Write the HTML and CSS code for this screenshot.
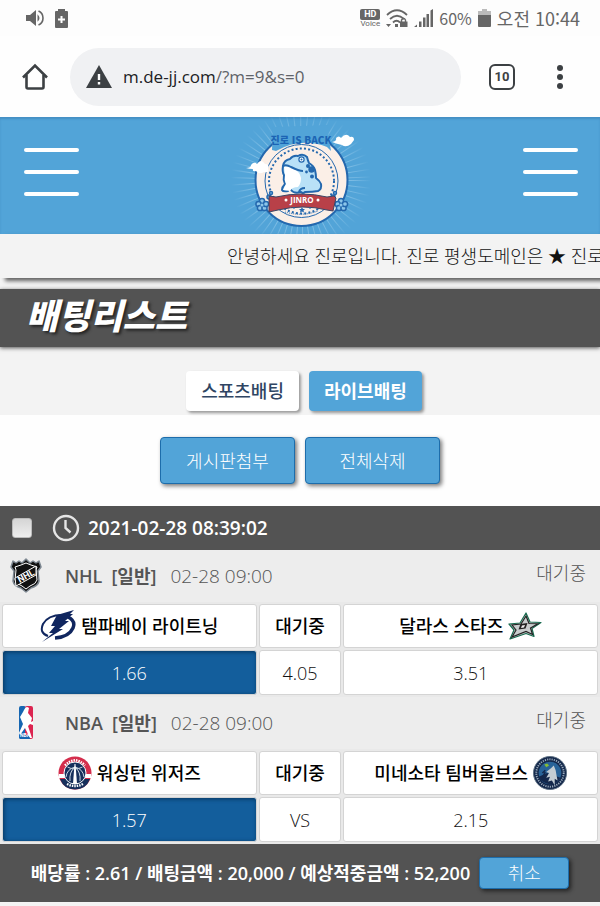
FILE: index.html
```html
<!DOCTYPE html>
<html lang="ko">
<head>
    <meta charset="UTF-8">
    <meta name="viewport" content="width=device-width, initial-scale=1.0">
    <title>배팅리스트</title>
    <link rel="stylesheet" href="styles.css">
</head>
<body>

    <!-- 상태 표시줄 -->
    <div class="status-bar">
        <div class="status-left">
            <svg width="18" height="18" viewBox="0 0 18 18" fill="#666">
                <path d="M0 6h4l6-5v16l-6-5H0z"/>
                <path d="M11.500 5.200q4 3.800 0 7.600z"/>
                <path d="M12.500 2q4.500 2 4.500 7t-4.500 7" fill="none" stroke="#666" stroke-width="1.600"/>
            </svg>
            <svg width="13" height="19" viewBox="0 0 13 19">
                <path fill="#666" d="M3 2V0h7v2h2q1 0 1 1v15q0 1-1 1H1q-1 0-1-1V3q0-1 1-1z"/>
                <path stroke="#fff" stroke-width="2" d="M3 10.500h7M6.500 7v7"/>
            </svg>
        </div>
        <div class="status-right">
            <div class="hd"><b>HD</b><span>Voice</span></div>
            <svg width="22" height="19" viewBox="0 0 22 19">
                <g fill="none" stroke="#666" stroke-width="1.800">
                    <path d="M1 6q10-9.500 20 0"/>
                    <path d="M4 10q7-6.500 14 0"/>
                    <path d="M7 13.500q3.500-3.500 7 0"/>
                    <path d="M15.500 13v-2q2.500-3 4 0v2" stroke-width="1.400"/>
                </g>
                <path fill="#666" d="M0 15h5l-2.500 3zM9 15h3v3H9zM14 12.500h7.500V18H14z"/>
            </svg>
            <svg width="19" height="18" viewBox="0 0 19 18" fill="#666">
                <path d="M0 18l3-2.500V18zM5 12.500h2.500V18H5zM9 8.500h2.500V18H9zM12.500 5H15v13h-2.500zM16.500 1.500L19 0v18h-2.500z"/>
            </svg>
            <span class="percent">60%</span>
            <svg width="13" height="18" viewBox="0 0 13 18">
                <path fill="#bbb" d="M4 0h5v2h4v5H0V2h4z"/>
                <path fill="#666" d="M0 6h13v11q0 1-1 1H1q-1 0-1-1z"/>
            </svg>
            <span class="clock">오전 10:44</span>
        </div>
    </div>

    <!-- 브라우저 주소창 -->
    <div class="browser-bar">
        <button class="icon-btn" type="button" aria-label="홈">
            <svg width="28" height="28" viewBox="0 0 28 28" fill="none" stroke="#3c4043" stroke-width="2.600" stroke-linejoin="round">
                <path d="M2 14.500L14 2.500l12 12" stroke-linejoin="miter"/>
                <path d="M5.500 12v12q0 1.500 1.500 1.500h14q1.500 0 1.500-1.500V12"/>
            </svg>
        </button>
        <div class="address">
            <svg width="26" height="23" viewBox="0 0 26 23">
                <path fill="#3c4043" d="M13 0l13 23H0z"/>
                <path stroke="#fff" stroke-width="2.400" d="M13 9v6M13 17v2.500"/>
            </svg>
            <span class="url">m.de-jj.com<i>/?m=9&amp;s=0</i></span>
        </div>
        <button class="tab-count" type="button">10</button>
        <button class="icon-btn" type="button" aria-label="더보기">
            <svg width="8" height="26" viewBox="0 0 8 26" fill="#3c4043">
                <circle cx="4" cy="4" r="3"/><circle cx="4" cy="13" r="3"/><circle cx="4" cy="22" r="3"/>
            </svg>
        </button>
    </div>

    <!-- 사이트 헤더 -->
    <header>
        <button class="menu" type="button" aria-label="왼쪽 메뉴"><span></span><span></span><span></span></button>
        <a class="logo" href="#" aria-label="진로">
            <svg width="160" height="117" viewBox="0 2 160 117">
                <defs>
                    <radialGradient id="ray" gradientUnits="userSpaceOnUse" cx="80" cy="65" r="70">
                        <stop offset=".6" stop-color="#b9def4" stop-opacity=".6"/>
                        <stop offset="1" stop-color="#b9def4" stop-opacity="0"/>
                    </radialGradient>
                </defs>
                <!-- 방사형 빛줄기 -->
                <circle cx="80" cy="65" r="55" fill="none" stroke="url(#ray)" stroke-width="32" stroke-dasharray="1 5"/>
                <circle cx="80.500" cy="65" r="46" fill="#fbefe7" stroke="#2468ae" stroke-width="2"/>
                <circle cx="80.500" cy="66" r="36.500" fill="none" stroke="#2468ae" stroke-width="1"/>
                <circle cx="80.500" cy="66" r="32.500" fill="none" stroke="#2468ae" stroke-width="2" stroke-dasharray="2 2.200"/>
                <path fill="#52a4d8" d="M52 12l54-2 4 26-4-4Q80 22 55 36l-4-1z"/>
                <!-- 두꺼비 -->
                <path fill="#b9e1f7" stroke="#2468ae" stroke-width="2" stroke-linejoin="round" d="M62 51q1-6 7-7 3-4 8-3 5-3 9 1 1 4 2 6 5 3 6 7 1 4 1 8 4 3 5 6 1 5-3 7-5 1-13 1-2 2-4 0-7 2-10-2-1-2 0-4-3 2-3 5-5 1-6-1 0-3 3-6-2-4-1-9-2-3-1-9z"/>
                <path fill="#fff" d="M63 52q4-2 9 1 7 4 8 10 0 6-3 9-6 0-8 4l-7-1 3-6q-2-4-1-9z"/>
                <path fill="none" stroke="#2468ae" stroke-width="2" d="M62 51q3-2 8 1 8 4 12 4M78 77q1-4 6-4"/>
                <circle cx="80.500" cy="44.500" r="2.600" fill="#fff" stroke="#2468ae" stroke-width="1.200"/>
                <g fill="#2468ae"><circle cx="80.500" cy="44.500" r="1"/><circle cx="87" cy="51" r="2"/><circle cx="90.500" cy="54.500" r="3.200"/><circle cx="85.500" cy="57" r="1.400"/><circle cx="91" cy="61.500" r="2"/></g>
                <!-- 구름 -->
                <g fill="#fff">
                    <path d="M25 53q5 0 5-3 3-4 6-1 4-6 8 0 5 0 3 5 2 4-4 3-5 3-8-1-4 1-3-2-4 0-7-1zM111 27q5-1 4-4 3-3 5 0 5-6 9-1 4-1 4 3l-3 4q-5 4-9 1-5-1-10-3z"/>
                </g>
                <!-- 꽃 -->
                <g fill="#8cc6ea" stroke="#2468ae" stroke-width="1.500">
                    <g id="flower">
                        <circle cx="41" cy="86" r="2.600"/><circle cx="37.500" cy="89" r="2.600"/><circle cx="39" cy="93" r="2.600"/>
                        <circle cx="43.500" cy="93" r="2.600"/><circle cx="45" cy="89" r="2.600"/><circle cx="41" cy="90" r="1.500" stroke="none"/>
                    </g>
                    <use href="#flower" x="79"/>
                    <circle cx="48" cy="82" r="2"/><circle cx="112" cy="82" r="2"/>
                    <circle cx="50" cy="78" r="1.500"/><circle cx="114" cy="78" r="1.500"/>
                </g>
                <path fill="#b84048" stroke="#3b4565" stroke-width="1" d="M48 81l7 1q26-6 51 0l7-1 2 2-3 13-6-1q-24-6-49 0l-9 2z"/>
                <g fill="#fff"><circle cx="65" cy="85" r="1.500"/><circle cx="97" cy="85" r="1.500"/></g>
                <text class="logo-name" x="81" y="88" text-anchor="middle">JINRO</text>
                <path fill="#2468ae" d="M81 92l1 2h2l-1.500 1.500.500 2-2-1-2 1 .500-2L78 94h2zM73 92l1 1-1 1-1-1zM89 92l1 1-1 1-1-1z"/>
                <path fill="none" stroke="#2468ae" stroke-dasharray="1 1" d="M64 97q17 5 33-1"/>
                <text class="logo-title" x="80" y="29" text-anchor="middle">진로 IS BACK</text>
            </svg>
        </a>
        <button class="menu" type="button" aria-label="오른쪽 메뉴"><span></span><span></span><span></span></button>
    </header>

    <div class="notice"><p>안녕하세요 진로입니다. 진로 평생도메인은 ★ 진로</p></div>

    <h1 class="page-title">배팅리스트</h1>

    <nav class="tabs">
        <a href="#">스포츠배팅</a>
        <a href="#" class="active">라이브배팅</a>
    </nav>

    <div class="actions">
        <button class="btn" type="button">게시판첨부</button>
        <button class="btn" type="button">전체삭제</button>
    </div>

    <!-- 배팅 내역 -->
    <main>
        <div class="bet-head">
            <input type="checkbox" id="bet1">
            <label for="bet1">
                <svg width="28" height="28" viewBox="0 0 28 28" fill="none" stroke="#e6e6e6" stroke-width="2.400">
                    <circle cx="14" cy="14" r="12"/>
                    <path d="M13.500 6v8l5 4.500"/>
                </svg>
                2021-02-28 08:39:02
            </label>
        </div>

        <div class="match">
            <svg class="league-logo" width="32" height="36" viewBox="0 0 32 36">
                <path fill="#111" stroke="#7d8791" stroke-width="1.500" stroke-linejoin="round" d="M3 3l3 2 3-2 3 2 4-4 4 4 3-2 3 2 3-2 2 6-3 4 1 10q-1 5-8 7l-5 4-5-4q-7-2-8-7l1-10-3-4z"/>
                <path fill="none" stroke="#fff" stroke-width="1" d="M5 9l6-2 5-2 5 2 6 2-1 3 1 10q-1 4-7 6l-4 3-4-3q-6-2-7-6l1-10z"/>
                <path fill="#111" stroke="#fff" stroke-width="1" d="M5 20L26 8v9L6 28z"/>
                <text class="nhl-text" x="16" y="21" text-anchor="middle" transform="rotate(-29 16 18)">NHL</text>
            </svg>
            <strong>NHL</strong><strong>[일반]</strong><time>02-28 09:00</time>
            <span class="state">대기중</span>
        </div>
        <table class="odds">
            <tr>
                <th><div class="team">
                    <svg width="36" height="32" viewBox="0 0 36 32">
                        <path fill="none" stroke="#10265f" stroke-width="2" d="M22 5Q8 5 3 14q-4 9 5 12"/>
                        <path fill="none" stroke="#10265f" stroke-width="3.400" d="M28 7q8 4 5 11-4 9-18 10"/>
                        <path fill="#10265f" d="M34 0L17 5l-6 11h4l-6 7h4L2 32l21-13h-4l10-8h-4l8-7h-3z"/>
                    </svg>
                    탬파베이 라이트닝
                </div></th>
                <th class="mid">대기중</th>
                <th><div class="team">
                    달라스 스타즈
                    <svg width="34" height="28" viewBox="0 0 34 28">
                        <path fill="#c9cdce" stroke="#176b4f" stroke-width="1.200" stroke-linejoin="round" d="M18 1l4 9 11 .500-9 6 2 8-8-3L2 27l4-9-5-6 11-1z"/>
                        <path fill="none" stroke="#222" stroke-width="1.200" d="M18 4l3 7.500 9 .200-7.500 4.300 2 6.500-6.500-3L4 25l4-7-4-5 9-1z"/>
                        <path fill="#222" d="M12.500 12l7-1-2 5.500-7 1z"/>
                        <path fill="#eee" d="M14 13.500l3-.500-1 2.500-3 .500z"/>
                    </svg>
                </div></th>
            </tr>
            <tr>
                <td class="pick">1.66</td>
                <td>4.05</td>
                <td>3.51</td>
            </tr>
        </table>

        <div class="match">
            <svg class="league-logo" width="32" height="36" viewBox="0 0 32 36">
                <rect x="9" y="1" width="7" height="33" rx="2" fill="#1666b2"/>
                <rect x="15" y="1" width="8" height="33" rx="2" fill="#dc2450"/>
                <path fill="#1666b2" d="M9 22h4l-1 8h8v4h-9q-2 0-2-2z"/>
                <path fill="#fff" d="M14 5q2-5 5-2l-1 5 4 5-1 4 2-1v4l-3-1-2 2 4 12h-2l-5-10-5 7-1-2 4-9-3-7 3-5z"/>
                <text class="nba-text" x="15" y="32" text-anchor="middle">NBA</text>
            </svg>
            <strong>NBA</strong><strong>[일반]</strong><time>02-28 09:00</time>
            <span class="state">대기중</span>
        </div>
        <table class="odds">
            <tr>
                <th><div class="team">
                    <svg width="34" height="34" viewBox="0 0 34 34">
                        <circle cx="17" cy="17" r="16.500" fill="#d42d4c"/>
                        <path fill="#fff" d="M1 18h32v4H1z"/>
                        <path fill="#17305c" d="M2 23h30q-4 10.500-15 10.500T2 23z"/>
                        <path fill="none" stroke="#fff" stroke-width="2.400" stroke-dasharray="1.500 1" d="M7 9.500Q17-1 27 9.500M9 28q8 4 16 0"/>
                        <circle cx="17" cy="17" r="11" fill="#17305c" stroke="#fff"/>
                        <path fill="none" stroke="#c9d4df" stroke-width="1" d="M9.500 11q7.500 4 15 0M8 21q1-8 9-10 8 2 9 10M12 25q-1-9 5-14 6 5 5 14"/>
                        <path fill="#fff" d="M16.500 8h1l1.500 20h-4z"/>
                    </svg>
                    워싱턴 위저즈
                </div></th>
                <th class="mid">대기중</th>
                <th><div class="team">
                    미네소타 팀버울브스
                    <svg width="34" height="34" viewBox="0 0 36 36">
                        <circle cx="18" cy="18" r="17.500" fill="#14284b" stroke="#5d7184"/>
                        <circle cx="18" cy="18" r="14.500" fill="none" stroke="#9fb0bf" stroke-width="2" stroke-dasharray="1.200 1.200"/>
                        <circle cx="18" cy="18" r="12" fill="#286398"/>
                        <path fill="#14284b" d="M6 22l9-4 14 5q-4 7-11 7-8-1-12-8z"/>
                        <path fill="#c3cdd3" d="M22 10l2 5 1 6 1 5-3-2v7l-3-5-4 1 2-5-4 1 3-5-3-1 5-4z"/>
                        <path fill="none" stroke="#14284b" stroke-width="1.500" d="M8 26l5-9M10 18l3-3"/>
                        <path fill="#87bd34" d="M12 9l3-1 2 2-3 2z"/>
                    </svg>
                </div></th>
            </tr>
            <tr>
                <td class="pick">1.57</td>
                <td>VS</td>
                <td>2.15</td>
            </tr>
        </table>

        <div class="summary">
            <span>배당률 : 2.61 / 배팅금액 : 20,000 / 예상적중금액 : 52,200</span>
            <button class="btn small" type="button">취소</button>
        </div>
    </main>

</body>
</html>
```
FILE: styles.css
```css
/* 공통 스타일 */
* {
    box-sizing: border-box;
}

body {
    margin: 0;
    font-family: "Open Sans", "Noto Sans CJK KR", sans-serif;
    font-size: 18px;
    line-height: 24px;
    color: #111;
    background-color: #f3f3f3;
    overflow-x: hidden;
}

svg {
    display: block;
    flex: none;
}

button {
    font: inherit;
    cursor: pointer;
}

a {
    text-decoration: none;
}

/* 상태 표시줄 */
.status-bar {
    display: flex;
    justify-content: space-between;
    align-items: center;
    height: 36px;
    padding: 0 20px 0 26px;
    background-color: #fdfdfd;
    color: #666;
}

.status-left {
    display: flex;
    align-items: center;
    gap: 11px;
}

.status-right {
    display: flex;
    align-items: center;
    gap: 6px;
    font-family: "Noto Sans CJK KR", sans-serif;
    font-weight: 400;
}

.hd {
    display: flex;
    flex-direction: column;
    align-items: center;
    font: 400 8px/8px Roboto, sans-serif;
}

.hd b {
    width: 20px;
    background-color: #666;
    border-radius: 2px;
    color: #fff;
    font-size: 9px;
    line-height: 11px;
    text-align: center;
}

.percent {
    font-size: 16px;
}

.clock {
    font-size: 18px;
}

/* 주소창 */
.browser-bar {
    display: flex;
    align-items: center;
    height: 81px;
    padding: 0 20px 0 15px;
    background-color: #fefefe;
}

.icon-btn {
    display: flex;
    justify-content: center;
    width: 40px;
    padding: 0;
    border: 0;
    background: none;
}

.address {
    flex: 1;
    display: flex;
    align-items: center;
    gap: 11px;
    height: 58px;
    margin: 0 28px 0 15px;
    padding: 0 16px;
    border-radius: 29px;
    background-color: #f0f1f3;
}

.url {
    font-size: 17px;
    color: #202124;
}

.url i {
    font-style: normal;
    color: #5f6368;
}

.tab-count {
    width: 26px;
    height: 26px;
    margin-right: 25px;
    padding: 0;
    border: 2px solid #3c4043;
    border-radius: 6px;
    background: none;
    color: #3c4043;
    font: 700 13px/20px Roboto, sans-serif;
}

/* 사이트 헤더 */
header {
    display: flex;
    justify-content: space-between;
    align-items: center;
    padding: 0 22px 0 24px;
    background-color: #52a4d8;
    box-shadow: inset 0 2px 2px #4590c4;
}

.menu {
    display: flex;
    flex-direction: column;
    gap: 18px;
    width: 55px;
    padding: 0 0 8px;
    border: 0;
    background: none;
}

.menu span {
    height: 4px;
    border-radius: 2px;
    background-color: #fff;
}

.logo-name {
    fill: #fff;
    font: 700 8px "Open Sans", sans-serif;
}

.logo-title {
    fill: #1c64b4;
    font: 900 10px "Noto Sans CJK KR", sans-serif;
}

/* 공지 */
.notice {
    height: 44px;
    padding-left: 227px;
    background-color: #f3f3f3;
    box-shadow: 5px 3px 4px rgba(0, 0, 0, 0.6);
}

.notice p {
    margin: 0;
    font-weight: 300;
    line-height: 44px;
    white-space: nowrap;
}

/* 페이지 제목 */
.page-title {
    margin: 11px 0 0;
    padding: 0 26px 4px;
    background-color: #535353;
    box-shadow: 0 1px 4px #555;
    color: #fff;
    font-size: 35px;
    font-style: italic;
    font-weight: 900;
    line-height: 54px;
    text-shadow: 2px 2px 3px #222;
}

/* 탭 */
.tabs {
    display: flex;
    justify-content: center;
    gap: 10px;
    padding: 24px 0 4px 8px;
}

.tabs a {
    padding: 0 15px;
    border-radius: 4px;
    background-color: #fff;
    box-shadow: 2px 2px 3px #999;
    color: #2f4563;
    font-weight: 500;
    line-height: 40px;
}

.tabs a.active {
    background-color: #52a4d8;
    color: #fff;
    font-weight: 700;
}

/* 버튼 */
.actions {
    display: flex;
    justify-content: center;
    gap: 10px;
    padding: 22px 0;
    background-color: #fefefe;
}

.btn {
    width: 135px;
    height: 47px;
    padding: 0;
    border: 1px solid #1d6dab;
    border-radius: 4px;
    background-color: #52a4d8;
    box-shadow: 2px 2px 4px #777;
    color: #fff;
    font-weight: 300;
}

.btn.small {
    width: 90px;
    height: 32px;
    box-shadow: 2px 2px 4px #222;
}

/* 배팅 내역 */
.bet-head {
    display: flex;
    align-items: center;
    height: 44px;
    padding: 0 12px;
    background-color: #535353;
    color: #fff;
    font-size: 19px;
    font-weight: 600;
}

.bet-head input {
    appearance: none;
    width: 20px;
    height: 20px;
    margin: 0 20px 0 0;
    border: 1px solid #bbb;
    border-radius: 3px;
    background: linear-gradient(#d5d5d5, #eee);
}

.bet-head label {
    display: flex;
    align-items: center;
    gap: 8px;
}

.match {
    display: flex;
    align-items: center;
    gap: 9px;
    height: 52px;
    padding: 0 14px 0 10px;
    background-color: #ededed;
    color: #555;
}

.league-logo {
    margin-right: 14px;
}

.nhl-text {
    fill: #fff;
    font: 700 9px Roboto, sans-serif;
}

.nba-text {
    fill: #fff;
    font: 700 5px Roboto, sans-serif;
}

.match strong {
    font-weight: 600;
}

.match time {
    margin-left: 5px;
    font-size: 19px;
    font-weight: 300;
}

.state {
    align-self: flex-start;
    margin: 11px 0 0 auto;
    font-weight: 300;
}

.odds {
    width: 100%;
    table-layout: fixed;
    border-collapse: separate;
    border-spacing: 2px;
    background-color: #e9e9e9;
    text-align: center;
}

.odds th,
.odds td {
    height: 44px;
    padding: 0;
    border: 1px solid #d4d4d4;
    border-radius: 3px;
    background-color: #fff;
}

.odds th {
    font-weight: 500;
    color: #000;
}

.odds td {
    height: 45px;
    font-weight: 300;
}

.odds .mid {
    width: 14%;
}

.odds .pick {
    background-color: #135e9c;
    box-shadow: inset 1px 1px 4px #06345c;
    color: #fff;
}

.team {
    display: flex;
    justify-content: center;
    align-items: center;
    gap: 5px;
}

.summary {
    display: flex;
    justify-content: center;
    align-items: center;
    gap: 9px;
    height: 58px;
    background-color: #535353;
    color: #fff;
    font-weight: 600;
}
```
